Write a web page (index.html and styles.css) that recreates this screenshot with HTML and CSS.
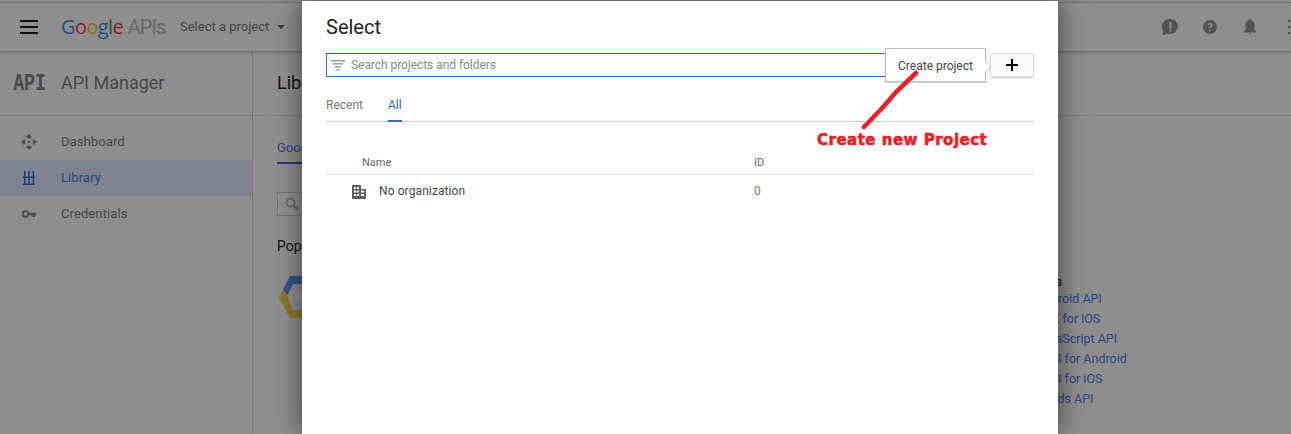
FILE: index.html
```html
<!DOCTYPE html>
<html lang="en">
<head>
<meta charset="utf-8">
<title>API Manager - Select</title>
<link rel="stylesheet" href="styles.css">
</head>
<body>
<div class="page">
  <header class="topbar">
    <svg class="menu-icon" width="18" height="14" viewBox="0 0 18 14"><path d="M0 0h18v2H0zM0 6h18v2H0zM0 12h18v2H0z" fill="#111"/></svg>
    <div class="logo"><span class="g-blue">G</span><span class="g-red">o</span><span class="g-yellow">o</span><span class="g-blue">g</span><span class="g-green">l</span><span class="g-red">e</span> <span class="logo-apis">APIs</span></div>
    <div class="project">Select a project <span class="caret"></span></div>
    <div class="top-actions">
      <svg width="16" height="16" viewBox="0 0 16 16"><path d="M8.500 0a7.500 7.500 0 0 1 0 15H5l-5 1 1.500-4A7.500 7.500 0 0 1 8.500 0z" fill="#8e8e8e"/><path d="M7.500 3h2v6.500h-2zM7.500 10.500h2v2h-2z" fill="#f5f5f5"/></svg>
      <svg width="14" height="14" viewBox="0 0 14 14"><circle cx="7" cy="7" r="7" fill="#8e8e8e"/><text x="7" y="11" class="help-mark">?</text></svg>
      <svg class="bell" width="12" height="16" viewBox="0 0 12 16"><path d="M6 0a1.200 1.200 0 0 1 1.200 1.300C9.500 2 10.500 4.200 10.500 6.500V11l1.500 1.500v1H0v-1L1.500 11V6.500C1.500 4.200 2.500 2 4.800 1.300A1.200 1.200 0 0 1 6 0zM5 14.300h2a1 1 0 0 1-2 0z" fill="#8e8e8e"/></svg>
      <svg class="dots" width="6" height="14" viewBox="0 0 6 14"><path d="M0 0h2v2H0zM3 0h2v2H3zM0 6h2v2H0zM3 6h2v2H3zM0 12h2v2H0zM3 12h2v2H3z" fill="#777"/></svg>
    </div>
  </header>
  <div class="body">
    <aside class="sidebar">
      <div class="side-head"><span class="api-mark">API</span><span class="side-title">API Manager</span></div>
      <nav class="side-nav">
        <a class="side-item">
          <svg class="side-icon" width="16" height="16" viewBox="0 0 16 16"><path d="M8 0l3 3-1.500 1.200h-3L5 3zM8 16l-3-3 1.500-1.200h3L11 13zM0 8l3-3 1.200 1.500v3L3 11zM16 8l-3 3-1.200-1.500v-3L13 5z" fill="#8a8a8a"/><rect x="7" y="7" width="2" height="2" fill="#8a8a8a"/></svg>
          Dashboard</a>
        <a class="side-item is-active">
          <svg class="side-icon" width="12" height="14" viewBox="0 0 12 14"><path d="M0 12.500h12V14H0zM0 5.500h12V7H0zM1 0h1.500v5.500H1zM5.200 0h1.600v5.500H5.200zM9.500 0H11v5.500H9.500zM1 7h1.500v5.500H1zM5.200 7h1.600v5.500H5.200zM9.500 7H11v5.500H9.500z" fill="#3f6fd0"/></svg>
          Library</a>
        <a class="side-item">
          <svg class="side-icon" width="15" height="8" viewBox="0 0 15 8"><path d="M4 0a4 4 0 0 1 3.800 2.700H15v2.600h-1.500V7H11V5.300H7.800A4 4 0 1 1 4 0zm0 2.200a1.800 1.800 0 1 0 0 3.600 1.800 1.800 0 0 0 0-3.600z" fill="#8a8a8a" fill-rule="evenodd"/></svg>
          Credentials</a>
      </nav>
    </aside>
    <main class="main">
      <h1 class="main-title">Library</h1>
      <div class="main-content">
        <div class="main-tabs"><span class="main-tab">Google APIs</span></div>
        <div class="api-search">
          <svg width="14" height="14" viewBox="0 0 14 14"><circle cx="5.500" cy="5.500" r="4" fill="none" stroke="#bbb" stroke-width="2"/><path d="M8.500 8.500L13 13" stroke="#bbb" stroke-width="2.500"/></svg>
        </div>
        <div class="api-columns">
          <section class="popular">
            <h2 class="col-head">Popular APIs</h2>
            <svg class="hex" width="60" height="42" viewBox="0 0 60 42"><path d="M12 0H40V8H15L9 20 5 13z" fill="#5a92ee"/><path d="M1 22L5 13 9 20 15 34H40V42H12z" fill="#f8cb4a"/><circle cx="24" cy="21" r="6" fill="#fff"/></svg>
          </section>
          <section class="maps">
            <h2 class="col-head">Google Maps APIs</h2>
            <ul class="api-list">
              <li>Google Maps Android API</li>
              <li>Google Maps SDK for iOS</li>
              <li>Google Maps JavaScript API</li>
              <li>Google Places API for Android</li>
              <li>Google Places API for iOS</li>
              <li>Google Maps Roads API</li>
            </ul>
          </section>
        </div>
      </div>
    </main>
  </div>
</div>
<div class="scrim"></div>
<div class="dialog">
  <h2 class="dialog-title">Select</h2>
  <div class="search-row">
    <div class="search-box">
      <svg width="14" height="11" viewBox="0 0 14 11"><path d="M0 0h14v1.500H0zM2 3h10v1.500H2zM4 6h6v1.500H4zM5.500 9h3v1.500h-3z" fill="#999"/></svg>
      <span class="search-text">Search projects and folders</span>
    </div>
    <button class="plus-btn"><svg width="12" height="12" viewBox="0 0 12 12"><path d="M5 0h2v5h5v2H7v5H5V7H0V5h5z" fill="#000"/></svg></button>
    <div class="tooltip">Create project</div>
  </div>
  <div class="tabs"><span class="tab">Recent</span><span class="tab tab-active">All</span></div>
  <div class="table-head"><span class="col-name">Name</span><span class="col-id">ID</span></div>
  <div class="table-row">
    <svg class="org-icon" width="14" height="14" viewBox="0 0 14 14"><path fill="#616161" fill-rule="evenodd" d="M0 0h9v4h5v10H0zM2 2v2h2V2zM5 2v2h2V2zM2 5.500v2h2v-2zM5 5.500v2h2v-2zM2 9v2h2V9zM5 9v2h2V9zM9 5.500v2h3v-2zM9 9v2h3V9z"/></svg>
    <span class="row-name">No organization</span><span class="row-id">0</span>
  </div>
</div>
<svg class="arrow" width="70" height="70" viewBox="0 0 70 70"><path d="M56 3L36 22 24 36 4 57" fill="none" stroke="#ee1c25" stroke-width="4.500" stroke-linecap="round"/></svg>
<div class="note">Create new Project</div>
</body>
</html>
```
FILE: styles.css
```css
* { box-sizing: border-box; }
html, body { margin: 0; height: 100%; overflow: hidden; }
body { font-family: Roboto, "Liberation Sans", sans-serif; background: #fff; color: #333; position: relative; }

.page { height: 434px; display: flex; flex-direction: column; padding-top: 2px; background: #f5f5f5; }
.topbar { height: 49px; flex: none; display: flex; align-items: center; padding: 0 0 1px 20px; background: #f5f5f5; border-top: 1px solid #ccc; box-shadow: 0 1px 3px rgba(0,0,0,.35); position: relative; }
.logo { margin-left: 23px; font-family: "Open Sans", sans-serif; font-size: 20px; letter-spacing: -.6px; white-space: nowrap; width: 119px; }
.g-blue { color: #4285f4; } .g-red { color: #ea4335; } .g-yellow { color: #fbbc05; } .g-green { color: #34a853; }
.logo-apis { color: #b0b0b0; font-family: Roboto, sans-serif; font-weight: 400; font-size: 20px; letter-spacing: -1px; }
.project { font-size: 13px; color: #757575; display: flex; align-items: center; gap: 8px; }
.caret { width: 0; height: 0; border: 4px solid transparent; border-top-color: #666; border-bottom: 0; }
.top-actions { margin-left: auto; margin-right: -3px; display: flex; align-items: center; gap: 25px; }
.bell { margin-left: 2px; }
.dots { margin-left: 7px; }
.help-mark { font: 700 11px Roboto, sans-serif; fill: #f5f5f5; text-anchor: middle; }

.body { flex: 1; display: flex; min-height: 0; }
.sidebar { width: 253px; flex: none; border-right: 1px solid #ccc; background: #f5f5f5; }
.side-head { height: 65px; display: flex; align-items: center; border-bottom: 1px solid #ddd; }
.api-mark { font: 700 24px "Liberation Mono", monospace; color: #808080; width: 43px; margin-left: 8px; transform: scaleX(.76); flex: none; }
.side-title { font-size: 18px; color: #7a7a7a; margin-left: 10px; padding-bottom: 2px; }
.side-nav { padding-top: 8px; }
.side-item { height: 36px; display: flex; align-items: center; font-size: 13px; color: #7a7a7a; padding: 0 0 2px 61px; position: relative; letter-spacing: .1px; }
.side-icon { position: absolute; left: 29px; top: 50%; transform: translate(-50%, -50%); }
.is-active { background: #d9e3f7; color: #4a7be0; }

.main { flex: 1; min-width: 0; }
.main-title { margin: 0; height: 65px; padding: 0 0 2px 24px; display: flex; align-items: center; font-size: 18px; font-weight: 400; color: #222; border-bottom: 1px solid #ddd; }
.main-content { padding: 16px 24px 0; }
.main-tabs { height: 32px; }
.main-tab { display: inline-block; height: 32px; line-height: 31px; font-size: 13px; color: #4a7be0; border-bottom: 2px solid #3367d6; }
.api-search { margin-top: 28px; width: 300px; height: 24px; border: 1px solid #ccc; padding: 3px 0 0 7px; }
.api-columns { display: flex; margin-top: 20px; }
.popular { width: 682px; flex: none; }
.col-head { margin: 0; font-size: 12.500px; font-weight: 400; line-height: 20px; color: #222; }
.popular .col-head { font-size: 14px; }
.hex { display: block; margin-top: 20px; margin-left: 1px; }
.maps { padding-top: 39px; }
.maps .col-head { font-weight: 500; line-height: 14px; }
.api-list { list-style: none; margin: 0; padding: 0; font-size: 12.500px; color: #4a7be0; }
.api-list li { line-height: 20px; white-space: nowrap; }

.scrim { position: absolute; inset: 0; background: rgba(0,0,0,.42); }

.dialog { position: absolute; left: 302px; top: 1px; width: 756px; bottom: 0; background: #fff; box-shadow: 0 0 24px rgba(0,0,0,.55); padding: 13px 24px 0; }
.dialog-title { margin: 0; font-size: 20px; font-weight: 400; line-height: 26px; color: #222; }
.search-row { margin-top: 13px; display: flex; gap: 8px; position: relative; }
.search-box { flex: 1; height: 24px; border: 1px solid #3367d6; display: flex; align-items: center; gap: 6px; padding-left: 4px; }
.search-text { font-size: 12px; color: #888; padding-bottom: 1px; letter-spacing: -.05px; }
.plus-btn { width: 44px; height: 24px; border: 1px solid #ddd; border-radius: 2px; background: #fafafa; box-shadow: 0 1px 2px rgba(0,0,0,.2); display: flex; align-items: center; justify-content: center; padding: 0; }
.tooltip { position: absolute; left: 559px; top: -5px; width: 101px; height: 34px; padding-top: 2px; background: #fff; border: 1px solid #bbb; box-shadow: 0 1px 2px rgba(0,0,0,.2); font-size: 12px; color: #444; display: flex; align-items: center; justify-content: center; }
.tooltip::after { content: ""; position: absolute; right: -5px; top: 13px; width: 8px; height: 8px; background: #fff; border-top: 1px solid #ccc; border-right: 1px solid #ccc; transform: rotate(45deg); }
.tabs { margin-top: 15px; display: flex; gap: 25px; height: 30px; border-bottom: 1px solid #ccc; font-size: 12px; }
.tab { color: #777; height: 30px; line-height: 26px; }
.tab-active { color: #3367d6; border-bottom: 2px solid #3367d6; }
.table-head { margin-top: 30px; height: 23px; border-bottom: 1px solid #e5e5e5; display: flex; font-size: 11px; color: #666; line-height: 22px; padding-left: 36px; position: relative; }
.col-name { width: 392px; }
.table-row { height: 32px; display: flex; align-items: center; font-size: 12px; color: #444; padding-left: 26px; letter-spacing: .1px; }
.org-icon { flex: none; margin-right: 13px; margin-top: 2px; }
.row-name { width: 375px; padding-bottom: 1px; }
.row-id { color: #777; padding-bottom: 1px; }

.arrow { position: absolute; left: 860px; top: 70px; }
.note { position: absolute; left: 817px; top: 131px; font: 700 15px "DejaVu Sans", sans-serif; letter-spacing: .5px; color: #ee1c25; white-space: nowrap; -webkit-text-stroke: .6px #ee1c25; }
```
